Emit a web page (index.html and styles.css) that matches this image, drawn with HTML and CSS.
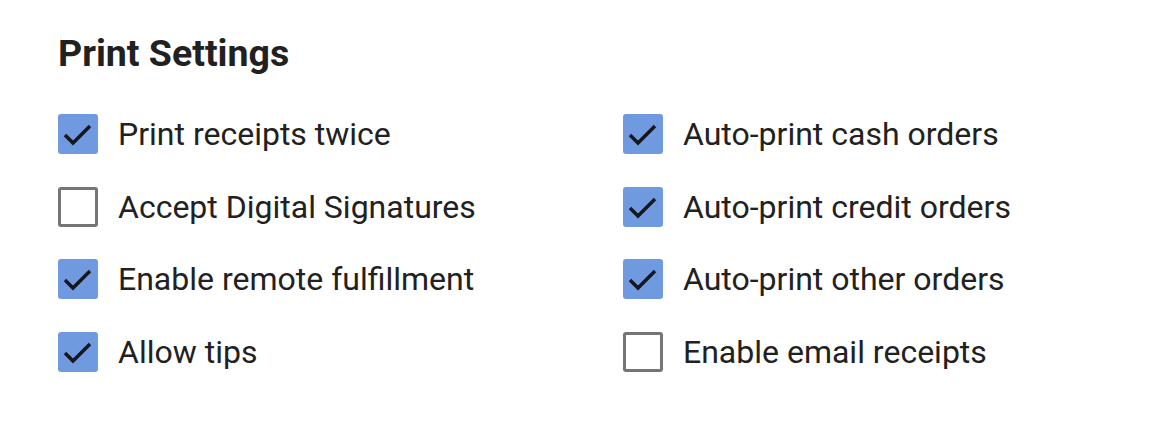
FILE: index.html
```html
<!DOCTYPE html>
<html lang="en">

<head>
    <meta charset="UTF-8">
    <meta name="viewport" content="width=device-width, initial-scale=1.0">
    <title>Print Settings</title>
    <link rel="stylesheet" href="styles.css">
</head>

<body>
    <div class="panel">
        <h2 class="title">Print Settings</h2>
        <div class="options">
            <label class="opt"><span class="box checked"><svg viewBox="0 0 40 40"><path d="M7 21 L15 29 L32 12"/></svg></span>Print receipts twice</label>
            <label class="opt"><span class="box checked"><svg viewBox="0 0 40 40"><path d="M7 21 L15 29 L32 12"/></svg></span>Auto-print cash orders</label>
            <label class="opt"><span class="box"></span>Accept Digital Signatures</label>
            <label class="opt"><span class="box checked"><svg viewBox="0 0 40 40"><path d="M7 21 L15 29 L32 12"/></svg></span>Auto-print credit orders</label>
            <label class="opt"><span class="box checked"><svg viewBox="0 0 40 40"><path d="M7 21 L15 29 L32 12"/></svg></span>Enable remote fulfillment</label>
            <label class="opt"><span class="box checked"><svg viewBox="0 0 40 40"><path d="M7 21 L15 29 L32 12"/></svg></span>Auto-print other orders</label>
            <label class="opt"><span class="box checked"><svg viewBox="0 0 40 40"><path d="M7 21 L15 29 L32 12"/></svg></span>Allow tips</label>
            <label class="opt"><span class="box"></span>Enable email receipts</label>
        </div>
    </div>
</body>
</html>
```

FILE: styles.css
```css
body {
    margin: 0;
    background: #fff;
    font-family: Roboto, "Liberation Sans", sans-serif;
    color: #212121;
}

.panel {
    padding: 29px 58px;
}

.title {
    margin: 0 0 37px 0;
    font-size: 37.5px;
    font-weight: 700;
    line-height: 48px;
}

.options {
    display: grid;
    grid-template-columns: 565px 1fr;
    grid-auto-rows: 72.7px;
}

.opt {
    display: flex;
    align-items: center;
    height: 40px;
    font-size: 32px;
    cursor: pointer;
}

.box {
    box-sizing: border-box;
    width: 40px;
    height: 40px;
    margin-right: 20px;
    border: 3px solid #757575;
    border-radius: 3px;
    flex-shrink: 0;
}

.box.checked {
    border: none;
    background: #6f9ae0;
}

.box svg {
    display: block;
    width: 40px;
    height: 40px;
}

.box path {
    fill: none;
    stroke: #15171c;
    stroke-width: 3.5;
}
```
